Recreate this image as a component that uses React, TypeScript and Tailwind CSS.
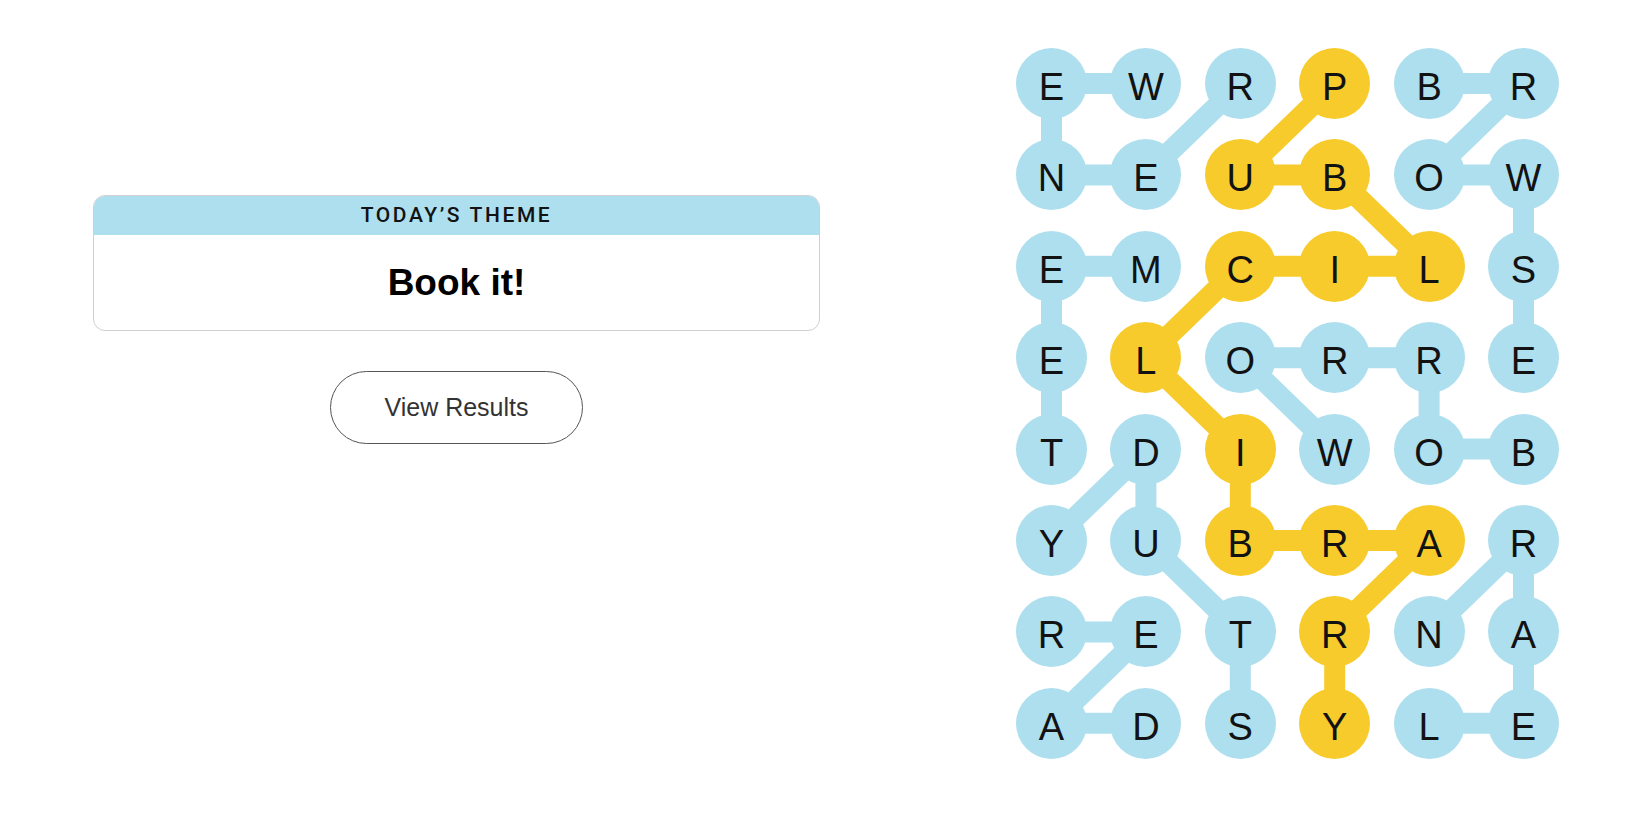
// Strands — finished board: theme card on the left, letter grid on the right.

const GRID = ["EWRPBR", "NEUBOW", "EMCILS", "ELORRE", "TDIWOB", "YUBRAR", "RETRNA", "ADSYLE"];

type Cell = [number, number]; // [row, col]

// PUBLICLIBRARY
const SPANGRAM: Cell[] = [
  [0, 3], [1, 2], [1, 3], [2, 4], [2, 3], [2, 2], [3, 1],
  [4, 2], [5, 2], [5, 3], [5, 4], [6, 3], [7, 3],
];

const WORDS: Cell[][] = [
  [[0, 2], [1, 1], [1, 0], [0, 0], [0, 1]], // RENEW
  [[0, 4], [0, 5], [1, 4], [1, 5], [2, 5], [3, 5]], // BROWSE
  [[2, 1], [2, 0], [3, 0], [4, 0]], // MEET
  [[7, 2], [6, 2], [5, 1], [4, 1], [5, 0]], // STUDY
  [[4, 5], [4, 4], [3, 4], [3, 3], [3, 2], [4, 3]], // BORROW
  [[6, 0], [6, 1], [7, 0], [7, 1]], // READ
  [[7, 4], [7, 5], [6, 5], [5, 5], [6, 4]], // LEARN
];

const BLUE = "#aedfee";
const YELLOW = "#f7cb2c";

const STEP_X = 94.4;
const STEP_Y = 91.4;
const R = 35.5;
const BOARD_W = 6 * 71 + 5 * 23.4;
const BOARD_H = 8 * 71 + 7 * 20.4;

const cx = (c: number) => R + c * STEP_X;
const cy = (r: number) => R + r * STEP_Y;

const isSpangram = (r: number, c: number) => SPANGRAM.some(([a, b]) => a === r && b === c);

function Path({ cells, color }: { cells: Cell[]; color: string }) {
  return (
    <polyline
      points={cells.map(([r, c]) => `${cx(c)},${cy(r)}`).join(" ")}
      fill="none"
      stroke={color}
      strokeWidth={21}
      strokeLinejoin="round"
    />
  );
}

function Board() {
  return (
    <div className="relative" style={{ width: BOARD_W, height: BOARD_H }}>
      {/* connector lines sit under the letter circles */}
      <svg className="absolute inset-0" width={BOARD_W} height={BOARD_H}>
        {WORDS.map((w, i) => (
          <Path key={i} cells={w} color={BLUE} />
        ))}
        <Path cells={SPANGRAM} color={YELLOW} />
      </svg>
      <div className="relative grid grid-cols-[repeat(6,71px)] auto-rows-[71px] gap-x-[23.4px] gap-y-[20.4px]">
        {GRID.flatMap((row, r) =>
          row.split("").map((ch, c) => (
            <div
              key={`${r}-${c}`}
              className={`flex items-center justify-center rounded-full pt-[7px] text-[38px] leading-none text-[#121212] ${
                isSpangram(r, c) ? "bg-[#f7cb2c]" : "bg-[#aedfee]"
              }`}
            >
              {ch}
            </div>
          ))
        )}
      </div>
    </div>
  );
}

export default function App() {
  return (
    <div className="flex h-[825px] w-full justify-between bg-white pl-[93px] pr-[91px] pt-[48px] font-['Liberation_Sans',Arial,sans-serif]">
      <div className="flex w-[727px] flex-col items-center pt-[147px]">
        <div className="w-full overflow-hidden rounded-[12px] border border-[#d0d0d0]">
          <div className="flex h-[39px] items-center justify-center bg-[#aedfee] font-['Roboto',Arial,sans-serif] text-[21px] font-medium tracking-[2.6px] text-[#121212]">
            TODAY’S THEME
          </div>
          <div className="flex h-[95px] items-center justify-center text-[37px] font-bold text-black">
            Book it!
          </div>
        </div>
        <button className="mt-[40px] flex h-[73px] w-[253px] items-center justify-center rounded-full border border-[#555] text-[25px] text-[#333]">
          View Results
        </button>
      </div>
      <Board />
    </div>
  );
}
